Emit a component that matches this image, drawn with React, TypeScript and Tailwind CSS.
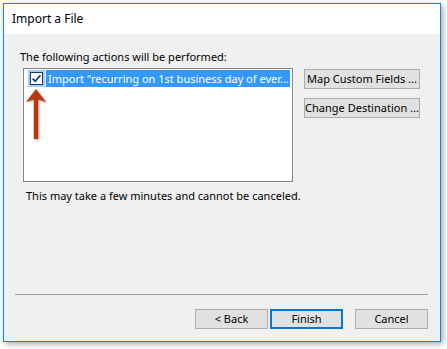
import React from 'react';

function Checkbox() {
  return (
    <div className="w-[17px] h-[17px] bg-[#9fcff9] flex items-center justify-center">
      <svg width="13" height="13" viewBox="0 0 13 13">
        <rect x="0.5" y="0.5" width="12" height="12" fill="#ffffff" stroke="#1d3b6a" />
        <path d="M2.6 6.6 L5.2 9.2 L10.4 3.4" fill="none" stroke="#1d3b6a" strokeWidth="1.7" />
      </svg>
    </div>
  );
}

function Arrow() {
  return (
    <svg className="absolute left-0 top-[18px]" width="26" height="56" viewBox="0 0 26 56">
      <defs>
        <filter id="sh" x="-50%" y="-50%" width="200%" height="200%">
          <feDropShadow dx="1" dy="1" stdDeviation="1" floodColor="#000" floodOpacity="0.35" />
        </filter>
      </defs>
      <path
        d="M12 2 L22 15 L14.2 12.5 L14.2 52 L9.8 52 L9.8 12.5 L2 15 Z"
        fill="#b8380f"
        filter="url(#sh)"
      />
    </svg>
  );
}

function Btn({ children, primary }: { children: React.ReactNode; primary?: boolean }) {
  return (
    <div
      className={`w-[73px] h-[20px] flex items-center justify-center bg-[#e1e1e1] text-black ${
        primary ? 'border-2 border-[#0078d7]' : 'border border-[#adadad]'
      }`}
    >
      {children}
    </div>
  );
}

export default function App() {
  return (
    <div
      className="w-[447px] h-[349px] bg-white pt-[3px] pl-[3px] text-[11px] leading-[14px] text-black"
      style={{ fontFamily: '"Noto Sans", "Open Sans", sans-serif' }}
    >
      <div className="w-[438px] h-[339px] border border-[#1883d7] shadow-[2px_2px_6px_rgba(0,0,0,0.35)] flex flex-col">
        <div className="h-[30px] bg-white flex items-center pl-[8px] text-[12px]">Import a File</div>
        <div className="flex-1 bg-[#f0f0f0] flex flex-col pb-[12px]">
          <div className="mt-[16px] ml-[16px]">The following actions will be performed:</div>
          <div className="flex mt-[4px] ml-[19px]">
            <div className="relative w-[270px] h-[114px] border border-[#828790] bg-white pt-[1px] pl-[4px]">
              <div className="flex items-center h-[17px]">
                <Checkbox />
                <div className="ml-px w-[244px] h-[17px] bg-[#3399ff] text-white flex items-center pl-[2px] whitespace-nowrap overflow-hidden">
                  Import "recurring on 1st business day of ever...
                </div>
              </div>
              <Arrow />
            </div>
            <div className="ml-[11px] mt-[1px] flex flex-col gap-[9px]">
              <div className="w-[116px] h-[20px] border border-[#adadad] bg-[#e1e1e1] flex items-center justify-center whitespace-nowrap">
                Map Custom Fields ...
              </div>
              <div className="w-[116px] h-[20px] border border-[#adadad] bg-[#e1e1e1] flex items-center justify-center whitespace-nowrap">
                Change Destination ...
              </div>
            </div>
          </div>
          <div className="mt-[7px] ml-[22px]">This may take a few minutes and cannot be canceled.</div>
          <div className="flex-1" />
          <div className="ml-[11px] w-[413px] h-px bg-[#a0a0a0]" />
          <div className="mt-[14px] ml-[191px] flex">
            <Btn>&lt; Back</Btn>
            <div className="ml-[2px]">
              <Btn primary>Finish</Btn>
            </div>
            <div className="ml-[12px]">
              <Btn>Cancel</Btn>
            </div>
          </div>
        </div>
      </div>
    </div>
  );
}
